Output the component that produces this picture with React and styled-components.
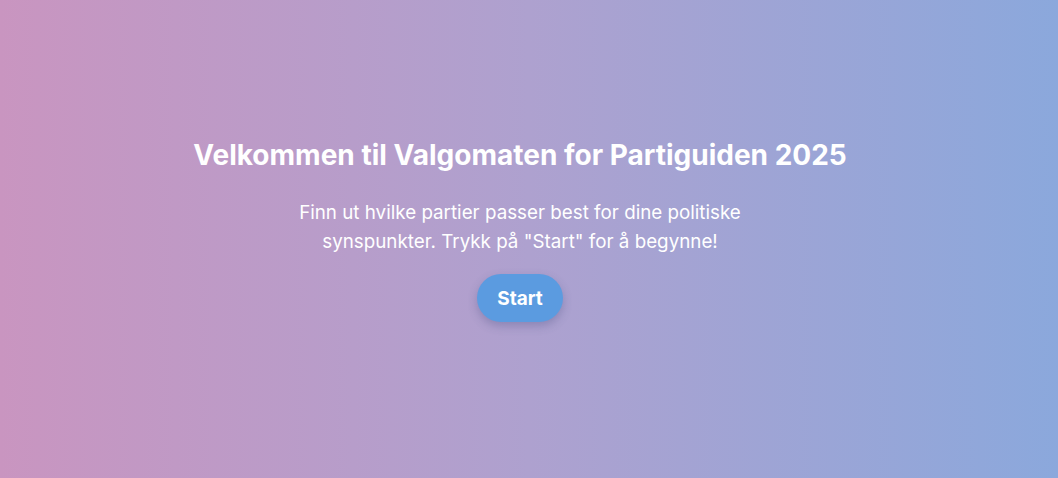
import React from "react";
import styled, { createGlobalStyle } from "styled-components";

const Global = createGlobalStyle`
  html, body { margin: 0; padding: 0; height: 100%; }
  body { font-family: Inter, "Noto Sans", sans-serif; }
  #root { height: 100%; }
`;

const Page = styled.main`
  box-sizing: border-box;
  height: 100vh;
  padding-right: 18px;
  display: flex;
  align-items: center;
  justify-content: center;
  background: linear-gradient(90deg, #c995c0 0%, #aea1cf 50%, #8ba8dc 100%);
  color: #fff;
`;

const Intro = styled.section`
  display: flex;
  flex-direction: column;
  align-items: center;
  text-align: center;
  margin-top: -18px;
`;

const Title = styled.h1`
  margin: 0 0 26px;
  font-size: 28px;
  font-weight: 700;
  line-height: 34px;
`;

const Lead = styled.p`
  margin: 0 0 18px;
  max-width: 480px;
  font-size: 18.8px;
  line-height: 29px;
  font-weight: 400;
`;

const StartButton = styled.button`
  height: 48px;
  padding: 0 20px;
  border: none;
  border-radius: 24px;
  background: #5b9be0;
  color: #fff;
  font-family: inherit;
  font-size: 19px;
  font-weight: 700;
  box-shadow: 0 4px 10px rgba(60, 70, 120, 0.3);
  cursor: pointer;
`;

export default function App() {
  return (
    <>
      <Global />
      <Page>
        <Intro>
          <Title>Velkommen til Valgomaten for Partiguiden 2025</Title>
          <Lead>
            Finn ut hvilke partier passer best for dine politiske synspunkter.
            Trykk på "Start" for å begynne!
          </Lead>
          <StartButton>Start</StartButton>
        </Intro>
      </Page>
    </>
  );
}
